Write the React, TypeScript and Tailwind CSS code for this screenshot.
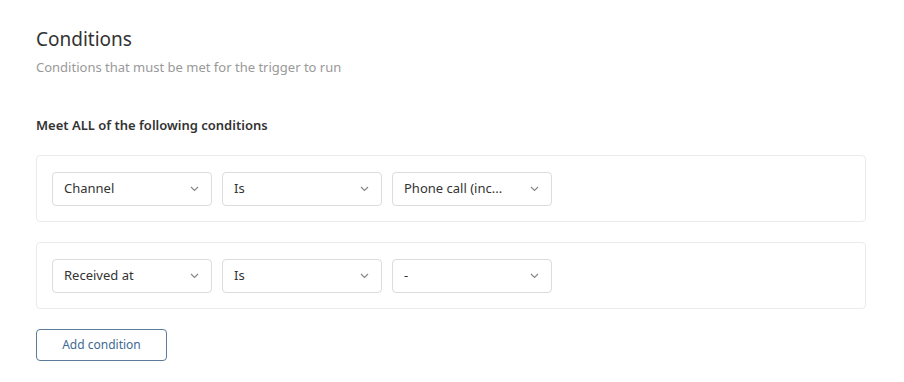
import React from 'react'

function Select ({ value }: { value: string }): React.ReactElement {
  return (
    <div className="flex h-[34px] w-[160px] items-center justify-between rounded-[4px] border border-[#dcdcdc] bg-white pl-[11px] pr-[11px] text-[13px] text-[#333]">
      <span>{value}</span>
      <svg width="9" height="6" viewBox="0 0 9 6" fill="none" className="mr-[1px]">
        <path d="M1 1l3.5 3.5L8 1" stroke="#888" strokeWidth="1.2" />
      </svg>
    </div>
  )
}

function ConditionRow ({ items }: { items: string[] }): React.ReactElement {
  return (
    <div className="flex h-[67px] items-center gap-[10px] rounded-[4px] border border-[#ebebeb] bg-white px-[15px]">
      {items.map((v, i) => <Select key={i} value={v} />)}
    </div>
  )
}

export default function App (): React.ReactElement {
  return (
    <div className="h-[382px] w-[904px] bg-white pl-[36px] pr-[38px] pt-[26px]" style={{ fontFamily: '"Noto Sans", "Open Sans", sans-serif' }}>
      <h1 className="text-[19px] leading-[26px] text-[#333]">Conditions</h1>
      <p className="mt-[6px] text-[13px] leading-[18px] text-[#999]">Conditions that must be met for the trigger to run</p>
      <h2 className="mt-[40px] text-[13px] font-semibold leading-[18px] text-[#333]">Meet ALL of the following conditions</h2>
      <div className="mt-[21px] flex flex-col gap-[20px]">
        <ConditionRow items={['Channel', 'Is', 'Phone call (inc...']} />
        <ConditionRow items={['Received at', 'Is', '-']} />
      </div>
      <button className="mt-[20px] h-[32px] w-[131px] rounded-[4px] border border-[#5b7c9a] bg-white text-[12px] text-[#3f6a93]">
        Add condition
      </button>
    </div>
  )
}
